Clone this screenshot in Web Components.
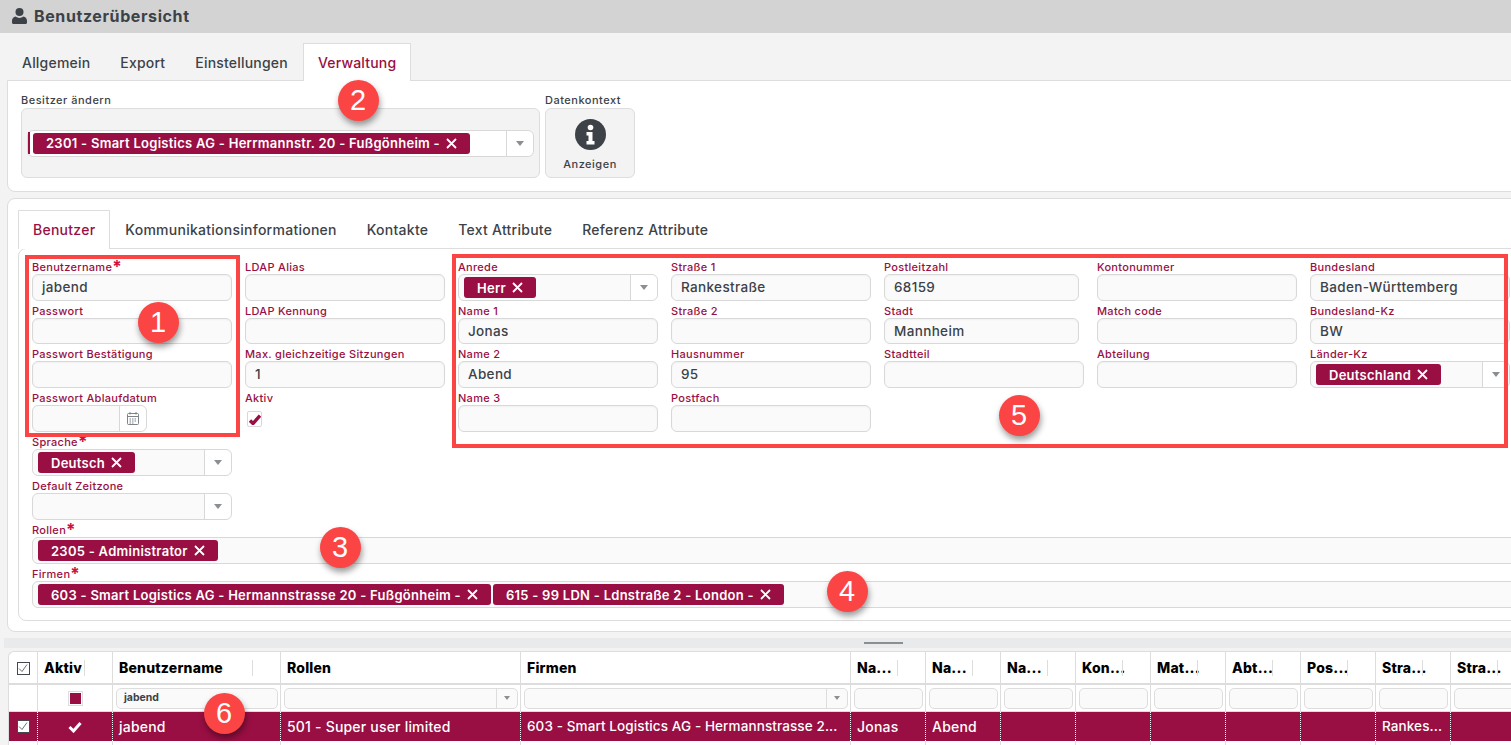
<!DOCTYPE html>
<html lang="de">
<head>
<meta charset="utf-8">
<title>Benutzerübersicht</title>
<style>
  html, body { margin: 0; height: 745px; overflow: hidden; }
  body {
    position: relative;
    background: #f3f3f3;
    color: #3c4248;
    font-family: Inter, "Liberation Sans", sans-serif;
  }
</style>
</head>
<body>

<app-header>Benutzerübersicht</app-header>

<tab-strip class="top" active="3" tabs="Allgemein|Export|Einstellungen|Verwaltung"></tab-strip>
<owner-card></owner-card>

<user-card>
  <tab-strip active="0" tabs="Benutzer|Kommunikationsinformationen|Kontakte|Text Attribute|Referenz Attribute"></tab-strip>
  <user-form>
    <form-field at="1/1" label="Benutzername" required value="jabend"></form-field>
    <form-field at="2/1" label="Passwort"></form-field>
    <form-field at="3/1" label="Passwort Bestätigung"></form-field>
    <form-field at="4/1" label="Passwort Ablaufdatum" type="date"></form-field>
    <form-field at="5/1" label="Sprache" required type="select"><value-chip>Deutsch</value-chip></form-field>
    <form-field at="6/1" label="Default Zeitzone" type="select"></form-field>
    <form-field at="7/1/auto/-1" label="Rollen" required type="multi"><value-chip>2305 - Administrator</value-chip></form-field>
    <form-field at="8/1/auto/-1" label="Firmen" required type="multi"><value-chip>603 - Smart Logistics AG - Hermannstrasse 20 - Fußgönheim -</value-chip><value-chip>615 - 99 LDN - Ldnstraße 2 - London -</value-chip></form-field>

    <form-field at="1/2" label="LDAP Alias"></form-field>
    <form-field at="2/2" label="LDAP Kennung"></form-field>
    <form-field at="3/2" label="Max. gleichzeitige Sitzungen" value="1"></form-field>
    <form-field at="4/2" label="Aktiv" type="check"></form-field>

    <form-field at="1/3" label="Anrede" type="select"><value-chip>Herr</value-chip></form-field>
    <form-field at="2/3" label="Name 1" value="Jonas"></form-field>
    <form-field at="3/3" label="Name 2" value="Abend"></form-field>
    <form-field at="4/3" label="Name 3"></form-field>

    <form-field at="1/4" label="Straße 1" value="Rankestraße"></form-field>
    <form-field at="2/4" label="Straße 2"></form-field>
    <form-field at="3/4" label="Hausnummer" value="95"></form-field>
    <form-field at="4/4" label="Postfach"></form-field>

    <form-field at="1/5" label="Postleitzahl" value="68159" narrow></form-field>
    <form-field at="2/5" label="Stadt" value="Mannheim" narrow></form-field>
    <form-field at="3/5" label="Stadtteil"></form-field>

    <form-field at="1/6" label="Kontonummer"></form-field>
    <form-field at="2/6" label="Match code"></form-field>
    <form-field at="3/6" label="Abteilung"></form-field>

    <form-field at="1/7" label="Bundesland" value="Baden-Württemberg"></form-field>
    <form-field at="2/7" label="Bundesland-Kz" value="BW"></form-field>
    <form-field at="3/7" label="Länder-Kz" type="select"><value-chip>Deutschland</value-chip></form-field>
  </user-form>
</user-card>

<split-handle></split-handle>
<user-table></user-table>

<!-- screenshot annotations -->
<mark-frame box="25,255,215,182"></mark-frame>
<mark-frame box="452,254,1056,194"></mark-frame>
<mark-badge at="158,322">1</mark-badge>
<mark-badge at="358,100">2</mark-badge>
<mark-badge at="340,547">3</mark-badge>
<mark-badge at="847,591">4</mark-badge>
<mark-badge at="1019,415">5</mark-badge>
<mark-badge at="224,713">6</mark-badge>

<script>
const CRIMSON = "#990f43";
const FONT = `Inter, "Liberation Sans", sans-serif`;

class AppHeader extends HTMLElement {
  constructor() {
    super();
    this.attachShadow({ mode: "open" });
  }

  connectedCallback() {
    this.shadowRoot.innerHTML = /* html */`
    <style>
      :host {
        display: flex;
        align-items: center;
        gap: 7px;
        box-sizing: border-box;
        height: 33px;
        padding: 0 0 2px 12px;
        background: #d3d3d3;
        color: #3c4248;
        font: 700 16px/1 ${FONT};
        letter-spacing: .6px;
      }
      svg { width: 15px; height: 16px; fill: #3c4248; }
    </style>
    <svg viewBox="0 0 15 16"><circle cx="7.5" cy="4" r="4"/><path d="M3.6 8.6C1.4 9 0 10.800 0 13v1.500C0 15.400.6 16 1.500 16h12c.9 0 1.500-.6 1.500-1.500V13c0-2.200-1.400-4-3.600-4.400C10.400 9.500 9 10 7.500 10s-2.900-.5-3.900-1.400z"/></svg>
    <slot></slot>`;
  }
}

class TabStrip extends HTMLElement {
  constructor() {
    super();
    this.attachShadow({ mode: "open" });
  }

  connectedCallback() {
    const active = Number(this.getAttribute("active"));
    const tabs = this.getAttribute("tabs").split("|");
    this.shadowRoot.innerHTML = /* html */`
    <style>
      :host {
        display: flex;
        position: relative;
        z-index: 1;
        height: 39px;
        margin-bottom: -1px;
        font: 500 14px/1 ${FONT};
        letter-spacing: .26px;
        color: #3c4248;
      }
      :host(.top) { height: 38px; margin: 10px 0 -1px 7px; letter-spacing: .2px; }
      .tab {
        display: flex;
        align-items: center;
        padding: 0 14px;
        border: 1px solid transparent;
        border-bottom: 0;
        white-space: nowrap;
      }
      .tab.on {
        background: #fff;
        border-color: #ddd;
        color: ${CRIMSON};
      }
    </style>
    ${tabs.map((t, i) => `<div class="tab ${i === active ? "on" : ""}">${t}</div>`).join("")}`;
  }
}

class OwnerCard extends HTMLElement {
  constructor() {
    super();
    this.attachShadow({ mode: "open" });
  }

  connectedCallback() {
    this.shadowRoot.innerHTML = /* html */`
    <style>
      :host {
        display: flex;
        gap: 5px;
        box-sizing: border-box;
        width: 1560px;
        height: 112px;
        margin-left: 7px;
        padding: 13px 13px 0;
        background: #fff;
        border: 1px solid #ddd;
        border-radius: 0 0 0 8px;
        font: 500 11px/1 ${FONT};
        letter-spacing: .5px;
      }
      .group { display: flex; flex-direction: column; }
      .title { height: 14px; line-height: 12px; color: #3c4248; white-space: nowrap; }
      .box {
        display: flex;
        align-items: center;
        box-sizing: border-box;
        height: 70px;
        padding: 0 5px;
        background: #f3f3f3;
        border: 1px solid #ddd;
        border-radius: 6px;
      }
      .owner { width: 519px; }
      .owner form-select { flex: 1; letter-spacing: 0; }
      .info {
        width: 90px;
        padding: 0;
        flex-direction: column;
        justify-content: flex-start;
        color: #3c4248;
      }
      .info svg { width: 31px; height: 31px; margin: 10px 0 9px; }
    </style>
    <div class="group">
      <div class="title">Besitzer ändern</div>
      <div class="box owner">
        <form-select edge><value-chip>2301 - Smart Logistics AG - Herrmannstr. 20 - Fußgönheim -</value-chip></form-select>
      </div>
    </div>
    <div class="group">
      <div class="title">Datenkontext</div>
      <div class="box info">
        <svg viewBox="0 0 31 31">
          <circle cx="15.500" cy="15.500" r="15.500" fill="#3c4248"/>
          <circle cx="15.500" cy="8.500" r="2.800" fill="#fff"/>
          <path fill="#fff" d="M11.500 13h6v9h2v3.500h-8V22h2v-5.500h-2z"/>
        </svg>
        <span>Anzeigen</span>
      </div>
    </div>`;
  }
}

class UserCard extends HTMLElement {
  constructor() {
    super();
    this.attachShadow({ mode: "open" });
  }

  connectedCallback() {
    this.shadowRoot.innerHTML = /* html */`
    <style>
      :host {
        display: block;
        box-sizing: border-box;
        width: 1560px;
        height: 434px;
        margin: 6px 0 0 7px;
        padding: 11px 0 0 10px;
        background: #fff;
        border: 1px solid #ddd;
        border-radius: 8px 0 0 8px;
      }
    </style>
    <slot></slot>`;
  }
}

class UserForm extends HTMLElement {
  constructor() {
    super();
    this.attachShadow({ mode: "open" });
  }

  connectedCallback() {
    this.shadowRoot.innerHTML = /* html */`
    <style>
      :host {
        display: grid;
        grid-template-columns: repeat(7, 200px) 1fr;
        grid-template-rows: 44px 43px repeat(6, 44px);
        column-gap: 13px;
        box-sizing: border-box;
        height: 373px;
        padding: 8px 0 0 13px;
        border: 1px solid #ddd;
        border-radius: 8px 0 0 8px;
      }
    </style>
    <slot></slot>`;
  }
}

class FormField extends HTMLElement {
  constructor() {
    super();
    this.attachShadow({ mode: "open" });
  }

  connectedCallback() {
    const [row, col, , colEnd] = this.getAttribute("at").split("/");
    this.style.gridRow = row;
    this.style.gridColumn = colEnd ? `${col} / ${colEnd}` : col;

    const type = this.getAttribute("type") || "text";
    const star = this.hasAttribute("required") ? `<b>*</b>` : "";
    this.shadowRoot.innerHTML = /* html */`
    <style>
      :host {
        display: flex;
        flex-direction: column;
        justify-content: flex-end;
        min-width: 0;
        font-family: ${FONT};
      }
      .label {
        box-sizing: border-box;
        height: 17px;
        padding-top: 4px;
        font-size: 11px;
        font-weight: 500;
        line-height: 13px;
        letter-spacing: .3px;
        color: ${CRIMSON};
        white-space: nowrap;
      }
      b { color: #d0103f; font-size: 17px; line-height: 10px; font-weight: 700; vertical-align: -2px; }
      :host([narrow]) form-input { width: 195px; }
      .check-wrap { height: 27px; }
    </style>
    <div class="label">${this.getAttribute("label")}${star}</div>
    ${this.control(type)}`;
  }

  control(type) {
    if (type === "select") return `<form-select><slot></slot></form-select>`;
    if (type === "multi") return `<form-select nocaret><slot></slot></form-select>`;
    if (type === "date") return `<date-input></date-input>`;
    if (type === "check") return `<div class="check-wrap"><check-box></check-box></div>`;
    return `<form-input>${this.getAttribute("value") || ""}</form-input>`;
  }
}

class FormInput extends HTMLElement {
  constructor() {
    super();
    this.attachShadow({ mode: "open" });
  }

  connectedCallback() {
    this.shadowRoot.innerHTML = /* html */`
    <style>
      :host {
        display: flex;
        align-items: center;
        box-sizing: border-box;
        height: 27px;
        padding: 0 0 1px 9px;
        background: #fafafa;
        border: 1px solid #d8d8d8;
        border-radius: 6px;
        box-shadow: inset 0 1px 2px #0000000a;
        font-size: 13.500px;
        font-weight: 500;
        letter-spacing: .35px;
        color: #3c4248;
      }
    </style>
    <slot></slot>`;
  }
}

class DateInput extends HTMLElement {
  constructor() {
    super();
    this.attachShadow({ mode: "open" });
  }

  connectedCallback() {
    this.shadowRoot.innerHTML = /* html */`
    <style>
      :host {
        display: flex;
        box-sizing: border-box;
        width: 115px;
        height: 27px;
        background: #fafafa;
        border: 1px solid #d8d8d8;
        border-radius: 6px;
      }
      .fill { flex: 1; }
      .btn {
        display: flex;
        align-items: center;
        justify-content: center;
        width: 26px;
        background: #fff;
        border-left: 1px solid #d8d8d8;
        border-radius: 0 6px 6px 0;
      }
      svg { width: 12px; height: 13px; fill: none; stroke: #7d8388; }
    </style>
    <div class="fill"></div>
    <div class="btn">
      <svg viewBox="0 0 12 13">
        <rect x=".5" y="1.500" width="11" height="11" rx="1"/>
        <path d="M.5 4.500h11M3 0v2.500M9 0v2.500"/>
        <path stroke-dasharray="1.500 1" d="M2.500 7h7M2.500 9h7M2.500 11h5"/>
      </svg>
    </div>`;
  }
}

class FormSelect extends HTMLElement {
  constructor() {
    super();
    this.attachShadow({ mode: "open" });
  }

  connectedCallback() {
    this.shadowRoot.innerHTML = /* html */`
    <style>
      :host {
        display: flex;
        box-sizing: border-box;
        height: 27px;
        min-width: 0;
        background: #fafafa;
        border: 1px solid #d8d8d8;
        border-radius: 6px;
      }
      :host([edge]) { background: #fff; }
      .value {
        display: flex;
        align-items: center;
        gap: 2px;
        flex: 1;
        min-width: 0;
        padding-left: 5px;
      }
      :host([edge]) .value { padding-left: 0; }
      .edge { display: none; width: 2px; height: 22px; margin-right: 1px; background: ${CRIMSON}; }
      :host([edge]) .edge { display: block; }
      .caret {
        display: flex;
        align-items: center;
        justify-content: center;
        flex: none;
        width: 26px;
        background: #fff;
        border-left: 1px solid #d8d8d8;
        border-radius: 0 6px 6px 0;
      }
      :host([nocaret]) .caret { display: none; }
      svg { width: 8px; height: 5px; fill: #8a8f94; }
    </style>
    <div class="value"><span class="edge"></span><slot></slot></div>
    <div class="caret"><svg viewBox="0 0 8 5"><path d="M0 0h8L4 5z"/></svg></div>`;
  }
}

class ValueChip extends HTMLElement {
  constructor() {
    super();
    this.attachShadow({ mode: "open" });
  }

  connectedCallback() {
    this.shadowRoot.innerHTML = /* html */`
    <style>
      :host {
        display: inline-flex;
        align-items: center;
        gap: 6px;
        flex: none;
        height: 21px;
        padding: 0 13px;
        background: ${CRIMSON};
        border-radius: 3px;
        color: #fff;
        font-family: ${FONT};
        font-size: 13px;
        font-weight: 600;
        letter-spacing: .27px;
        white-space: nowrap;
      }
      svg { width: 11px; height: 11px; stroke: #fff; stroke-width: 1.800; fill: none; }
    </style>
    <slot></slot>
    <svg viewBox="0 0 11 11"><path d="M1 1l9 9M10 1l-9 9"/></svg>`;
  }
}

class CheckBox extends HTMLElement {
  constructor() {
    super();
    this.attachShadow({ mode: "open" });
  }

  connectedCallback() {
    this.shadowRoot.innerHTML = /* html */`
    <style>
      :host {
        display: flex;
        align-items: center;
        justify-content: center;
        box-sizing: border-box;
        width: 15px;
        height: 16px;
        margin: 6px 0 0 2px;
        background: #fff;
        border: 1px solid #d8d8d8;
        border-radius: 2px;
      }
      svg { width: 12px; height: 11px; fill: none; stroke: ${CRIMSON}; stroke-width: 3.400; }
    </style>
    <svg viewBox="0 0 12 11"><path d="M1 6.500l3 3 7-8"/></svg>`;
  }
}

class SplitHandle extends HTMLElement {
  constructor() {
    super();
    this.attachShadow({ mode: "open" });
  }

  connectedCallback() {
    this.shadowRoot.innerHTML = /* html */`
    <style>
      :host {
        display: flex;
        align-items: center;
        height: 10px;
        margin: 6px 0 3px 4px;
        background: #e9eaeb;
      }
      div { width: 39px; height: 2px; margin-left: 860px; background: #8a8f94; }
    </style>
    <div></div>`;
  }
}

class UserTable extends HTMLElement {
  constructor() {
    super();
    this.attachShadow({ mode: "open" });
  }

  static get styles() {
    return /* css */`
      :host {
        display: block;
        width: 1530px;
        height: 94px;
        margin-left: 8px;
        background: #fff;
        border-radius: 6px 0 0 0;
        border-top: 1px solid #ddd;
        border-left: 1px solid #ddd;
        font: 500 14px/1 ${FONT};
        color: #000;
        --cols: 29px 75px 168px 240px 330px repeat(9, 75px);
      }
      .row { display: grid; box-sizing: border-box; grid-template-columns: var(--cols); }
      .cell {
        display: flex;
        align-items: center;
        position: relative;
        box-sizing: border-box;
        padding-left: 6px;
        border-right: 1px solid #ddd;
        white-space: nowrap;
        overflow: hidden;
      }
      .head { height: 33px; border-bottom: 2px solid #ddd; }
      .head .cell { padding-top: 1px; font-weight: 800; letter-spacing: .2px; }
      .head .cell.sep::after {
        content: "";
        position: absolute;
        right: 27px;
        top: 8px;
        height: 16px;
        border-right: 1px solid #ddd;
      }
      .filter { height: 27px; border-bottom: 1px solid #ddd; }
      .filter .cell { padding: 0 2px 0 3px; justify-content: center; }
      .search {
        display: flex;
        align-items: center;
        box-sizing: border-box;
        width: 100%;
        height: 21px;
        padding-left: 7px;
        background: #fafafa;
        border: 1px solid #ddd;
        border-radius: 5px;
        font-size: 10.500px;
        font-weight: 700;
        color: #3c4248;
      }
      .search i {
        display: flex;
        align-items: center;
        justify-content: center;
        width: 20px;
        height: 100%;
        margin-left: auto;
        border-left: 1px solid #ddd;
      }
      .search svg { width: 6px; height: 4px; fill: #8a8f94; }
      .swatch {
        box-sizing: border-box;
        width: 15px;
        height: 15px;
        background: ${CRIMSON};
        border: 1px solid #ddd;
        box-shadow: inset 0 0 0 1px #fff;
      }
      .selected { height: 29px; background: ${CRIMSON}; color: #fff; letter-spacing: .2px; }
      .selected .cell { border-right: 1px dotted #fff; }
      .selected .tight { font-size: 13.500px; letter-spacing: .1px; }
      .blank { height: 4px; }
      .center { justify-content: center; padding: 0; }
      .tick {
        display: flex;
        align-items: center;
        justify-content: center;
        box-sizing: border-box;
        width: 13px;
        height: 13px;
        background: #fff;
        border: 1px solid #45494d;
      }
      .tick svg { width: 10px; height: 9px; fill: none; stroke: #6b7075; stroke-width: 1; }
      .white-check { width: 14px; height: 12px; fill: none; stroke: #fff; stroke-width: 3; }
    `;
  }

  connectedCallback() {
    const tick = `<span class="tick"><svg viewBox="0 0 10 9"><path d="M1 4.500l3 3 5-7"/></svg></span>`;
    const heads = ["Na...", "Na...", "Na...", "Kon...", "Mat...", "Abt...", "Pos...", "Stra...", "Stra..."];
    const caret = `<i><svg viewBox="0 0 6 4"><path d="M0 0h6L3 4z"/></svg></i>`;
    const cells = ["Jonas", "Abend", "", "", "", "", "", "Rankes...", ""];

    this.shadowRoot.innerHTML = /* html */`
    <style>${UserTable.styles}</style>
    <div class="row head">
      <div class="cell center">${tick}</div>
      <div class="cell sep">Aktiv</div>
      <div class="cell sep">Benutzername</div>
      <div class="cell">Rollen</div>
      <div class="cell">Firmen</div>
      ${heads.map(h => `<div class="cell sep">${h}</div>`).join("")}
    </div>
    <div class="row filter">
      <div class="cell"></div>
      <div class="cell"><span class="swatch"></span></div>
      <div class="cell"><div class="search">jabend</div></div>
      <div class="cell"><div class="search">${caret}</div></div>
      <div class="cell"><div class="search">${caret}</div></div>
      ${heads.map(() => `<div class="cell"><div class="search"></div></div>`).join("")}
    </div>
    <div class="row selected">
      <div class="cell center">${tick}</div>
      <div class="cell center"><svg class="white-check" viewBox="0 0 14 12"><path d="M1.500 6l4 4 7-8"/></svg></div>
      <div class="cell">jabend</div>
      <div class="cell">501 - Super user limited</div>
      <div class="cell tight">603 - Smart Logistics AG - Hermannstrasse 2...</div>
      ${cells.map(c => `<div class="cell ${c.length > 6 ? "tight" : ""}">${c}</div>`).join("")}
    </div>
    <div class="row blank">
      ${Array(14).fill(`<div class="cell"></div>`).join("")}
    </div>`;
  }
}

class MarkBadge extends HTMLElement {
  constructor() {
    super();
    this.attachShadow({ mode: "open" });
  }

  connectedCallback() {
    const [x, y] = this.getAttribute("at").split(",");
    this.style.left = `${x - 20.5}px`;
    this.style.top = `${y - 20.5}px`;
    this.shadowRoot.innerHTML = /* html */`
    <style>
      :host {
        position: absolute;
        z-index: 10;
        display: flex;
        align-items: center;
        justify-content: center;
        width: 41px;
        height: 41px;
        background: #fb4545;
        border-radius: 50%;
        box-shadow: 1px 4px 6px #00000066;
        color: #fff;
        font: 400 29px/1 "Liberation Sans", sans-serif;
      }
    </style>
    <slot></slot>`;
  }
}

class MarkFrame extends HTMLElement {
  constructor() {
    super();
    this.attachShadow({ mode: "open" });
  }

  connectedCallback() {
    const [x, y, w, h] = this.getAttribute("box").split(",");
    this.style.cssText = `left:${x}px;top:${y}px;width:${w}px;height:${h}px`;
    this.shadowRoot.innerHTML = /* html */`
    <style>
      :host {
        position: absolute;
        z-index: 9;
        box-sizing: border-box;
        border: 4px solid #fb4545;
        pointer-events: none;
      }
    </style>`;
  }
}

customElements.define("app-header", AppHeader);
customElements.define("tab-strip", TabStrip);
customElements.define("owner-card", OwnerCard);
customElements.define("user-card", UserCard);
customElements.define("user-form", UserForm);
customElements.define("form-field", FormField);
customElements.define("form-input", FormInput);
customElements.define("date-input", DateInput);
customElements.define("form-select", FormSelect);
customElements.define("value-chip", ValueChip);
customElements.define("check-box", CheckBox);
customElements.define("split-handle", SplitHandle);
customElements.define("user-table", UserTable);
customElements.define("mark-badge", MarkBadge);
customElements.define("mark-frame", MarkFrame);
</script>
</body>
</html>
